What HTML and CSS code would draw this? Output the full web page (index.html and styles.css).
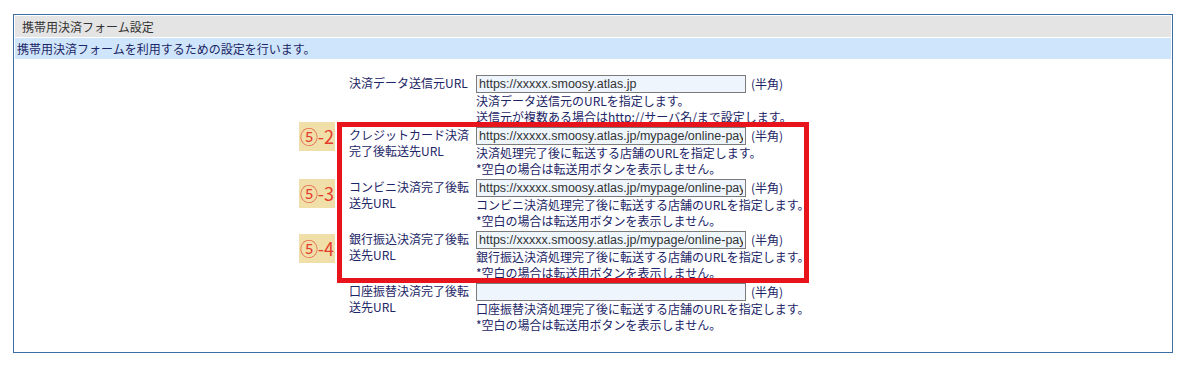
FILE: index.html
```html
<!DOCTYPE html>
<html lang="ja">
<head>
    <meta charset="UTF-8">
    <meta name="viewport" content="width=device-width, initial-scale=1.0">
    <title>携帯用決済フォーム設定</title>
    <link rel="stylesheet" href="styles.css">
</head>
<body>
    <div class="panel">
        <div class="panel-title">携帯用決済フォーム設定</div>
        <div class="panel-desc">携帯用決済フォームを利用するための設定を行います。</div>

        <div class="form">
            <div class="row">
                <div class="label">決済データ送信元URL</div>
                <div class="value">
                    <div class="field"><input type="text" value="https://xxxxx.smoosy.atlas.jp"><span class="unit">(半角)</span></div>
                    <div class="note">決済データ送信元のURLを指定します。</div>
                    <div class="note">送信元が複数ある場合はhttp://サーバ名/まで設定します。</div>
                </div>
            </div>

            <div class="marked">
                <div class="row">
                    <span class="badge b2">⑤-2</span>
                    <div class="label">クレジットカード決済完了後転送先URL</div>
                    <div class="value">
                        <div class="field"><input type="text" value="https://xxxxx.smoosy.atlas.jp/mypage/online-payment"><span class="unit">(半角)</span></div>
                        <div class="note">決済処理完了後に転送する店舗のURLを指定します。</div>
                        <div class="note">*空白の場合は転送用ボタンを表示しません。</div>
                    </div>
                </div>
                <div class="row">
                    <span class="badge b3">⑤-3</span>
                    <div class="label">コンビニ決済完了後転送先URL</div>
                    <div class="value">
                        <div class="field"><input type="text" value="https://xxxxx.smoosy.atlas.jp/mypage/online-payment"><span class="unit">(半角)</span></div>
                        <div class="note">コンビニ決済処理完了後に転送する店舗のURLを指定します。</div>
                        <div class="note">*空白の場合は転送用ボタンを表示しません。</div>
                    </div>
                </div>
                <div class="row">
                    <span class="badge b4">⑤-4</span>
                    <div class="label">銀行振込決済完了後転送先URL</div>
                    <div class="value">
                        <div class="field"><input type="text" value="https://xxxxx.smoosy.atlas.jp/mypage/online-payment"><span class="unit">(半角)</span></div>
                        <div class="note">銀行振込決済処理完了後に転送する店舗のURLを指定します。</div>
                        <div class="note">*空白の場合は転送用ボタンを表示しません。</div>
                    </div>
                </div>
            </div>

            <div class="row">
                <div class="label">口座振替決済完了後転送先URL</div>
                <div class="value">
                    <div class="field"><input type="text" value=""><span class="unit">(半角)</span></div>
                    <div class="note">口座振替決済処理完了後に転送する店舗のURLを指定します。</div>
                    <div class="note">*空白の場合は転送用ボタンを表示しません。</div>
                </div>
            </div>
        </div>
    </div>
</body>
</html>
```

FILE: styles.css
```css
body {
    margin: 0;
    padding: 14px 12px 0 13px;
    background-color: white;
    font-family: "Noto Sans CJK JP", "Noto Sans", sans-serif;
    font-size: 12px;
    color: #1c2566;
}
.panel {
    border: 1px solid #3b6ea5;
    padding: 1px 1px 18px 1px;
}
.panel-title {
    background-color: #e4e4e4;
    color: #333;
    height: 21px;
    line-height: 21px;
    padding-left: 7px;
}
.panel-desc {
    background-color: #cfe5fb;
    height: 21px;
    line-height: 21px;
    margin-top: 1px;
    padding-left: 2px;
}
.form {
    margin: 15px 0 0 327px;
    width: 462px;
}
.marked {
    position: relative;
}
.marked:after {
    content: "";
    position: absolute;
    top: -4px;
    bottom: -1px;
    left: -5px;
    right: -5px;
    border: 5px solid #e8141c;
    pointer-events: none;
}
.row {
    display: flex;
    padding: 1px 0;
    line-height: 16px;
    position: relative;
}
.label {
    flex: none;
    width: 120px;
    padding-left: 7px;
    margin-right: 7px;
}
.value {
    flex: 1;
    min-width: 0;
}
.note {
    white-space: nowrap;
}
.field {
    display: flex;
    align-items: center;
    height: 18px;
}
.field input {
    flex: none;
    box-sizing: border-box;
    width: 270px;
    height: 18px;
    margin: 0;
    padding: 0 2px;
    border: 1px solid #7b7b7b;
    background-color: #eef5fd;
    font-family: "Liberation Sans", Arial, sans-serif;
    font-size: 12.5px;
    color: #333;
}
.unit {
    margin-left: 5px;
    white-space: nowrap;
}
.badge {
    position: absolute;
    left: -43px;
    width: 36px;
    height: 29px;
    line-height: 29px;
    text-align: center;
    background-color: #f0dfa8;
    color: #e53b2c;
    font-size: 18px;
}
.b2 { top: -4px; }
.b3 { top: 1px; }
.b4 { top: 4px; }
```
